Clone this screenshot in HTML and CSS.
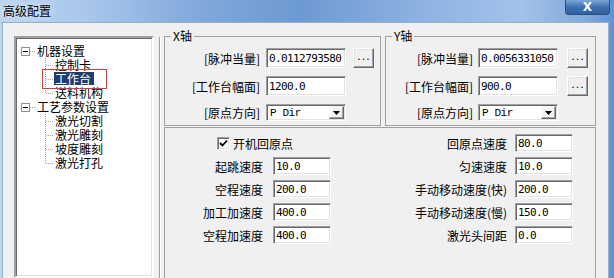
FILE: index.html
```html
<!DOCTYPE html>
<html>

<head>
  <meta charset="UTF-8" />
  <title>高级配置</title>
  <link rel="stylesheet" href="styles.css">
</head>

<body>
  <div class="window">
    <div class="titlebar">
      <span class="title">高级配置</span>
      <span class="close-btn">X</span>
    </div>

    <div class="client">
      <!-- 左侧设置树 -->
      <div class="tree">
        <ul class="tree-root">
          <li>
            <div class="node"><span class="expander"></span><span class="node-text">机器设置</span></div>
            <ul class="tree-children">
              <li><span class="node-text">控制卡</span></li>
              <li class="selected"><span class="node-text">工作台</span></li>
              <li><span class="node-text">送料机构</span></li>
            </ul>
          </li>
          <li>
            <div class="node"><span class="expander"></span><span class="node-text">工艺参数设置</span></div>
            <ul class="tree-children">
              <li><span class="node-text">激光切割</span></li>
              <li><span class="node-text">激光雕刻</span></li>
              <li><span class="node-text">坡度雕刻</span></li>
              <li><span class="node-text">激光打孔</span></li>
            </ul>
          </li>
        </ul>
        <div class="tree-mark"></div>
      </div>

      <div class="separator"></div>

      <div class="settings">
        <div class="axes">
          <fieldset class="axis axis-x">
            <legend>X轴</legend>
            <div class="axis-grid">
              <label>[脉冲当量]</label>
              <input class="edit" type="text" value="0.0112793580">
              <button class="dots">...</button>

              <label>[工作台幅面]</label>
              <input class="edit" type="text" value="1200.0">
              <span></span>

              <label>[原点方向]</label>
              <div class="combo">
                <span class="combo-text">P Dir</span>
                <span class="combo-btn"><svg width="7" height="4" viewBox="0 0 7 4"><path d="M0 0H7L3.5 4Z" fill="#000"/></svg></span>
              </div>
              <span></span>
            </div>
          </fieldset>

          <fieldset class="axis axis-y">
            <legend>Y轴</legend>
            <div class="axis-grid">
              <label>[脉冲当量]</label>
              <input class="edit" type="text" value="0.0056331050">
              <button class="dots">...</button>

              <label>[工作台幅面]</label>
              <input class="edit" type="text" value="900.0">
              <button class="dots">...</button>

              <label>[原点方向]</label>
              <div class="combo">
                <span class="combo-text">P Dir</span>
                <span class="combo-btn"><svg width="7" height="4" viewBox="0 0 7 4"><path d="M0 0H7L3.5 4Z" fill="#000"/></svg></span>
              </div>
              <span></span>
            </div>
          </fieldset>
        </div>

        <div class="params">
          <div class="param-col param-left">
            <div class="check-row">
              <span class="check-box"><svg width="9" height="9" viewBox="0 0 9 9"><path d="M1 4L3.5 6.5L8 1.5" fill="none" stroke="#000" stroke-width="1.8"/></svg></span>
              <span>开机回原点</span>
            </div>
            <label>起跳速度</label>
            <input class="edit small" type="text" value="10.0">
            <label>空程速度</label>
            <input class="edit small" type="text" value="200.0">
            <label>加工加速度</label>
            <input class="edit small" type="text" value="400.0">
            <label>空程加速度</label>
            <input class="edit small" type="text" value="400.0">
          </div>

          <div class="param-col param-right">
            <label>回原点速度</label>
            <input class="edit small" type="text" value="80.0">
            <label>匀速速度</label>
            <input class="edit small" type="text" value="10.0">
            <label>手动移动速度(快)</label>
            <input class="edit small" type="text" value="200.0">
            <label>手动移动速度(慢)</label>
            <input class="edit small" type="text" value="150.0">
            <label>激光头间距</label>
            <input class="edit small" type="text" value="0.0">
          </div>
        </div>
      </div>
    </div>
  </div>
</body>

</html>
```

FILE: styles.css
```css
body {
  margin: 0;
  width: 614px;
  height: 278px;
  overflow: hidden;
  font-family: "Noto Sans CJK SC", sans-serif;
  font-size: 12px;
  color: #000;
}

/* Window frame */
.window {
  height: 278px;
  display: flex;
  flex-direction: column;
  background: linear-gradient(90deg, #bcd5f1 0, #a8c6eb 90px, #80a8db 200px, #6d99d2 300px, #8db2e2 420px, #a3c2e9 520px, #7fa7d9 590px, #5d93d4 614px);
}

.titlebar {
  height: 22px;
  display: flex;
  justify-content: space-between;
  align-items: flex-start;
}

.title {
  padding: 4px 0 0 3px;
  font-size: 12px;
  line-height: 14px;
  text-shadow: 0 0 6px rgba(255, 255, 255, 0.9);
}

.close-btn {
  width: 45px;
  height: 15px;
  margin-right: 4px;
  box-sizing: border-box;
  border: 1px solid #2b4f82;
  border-top: none;
  border-radius: 0 0 4px 4px;
  background: linear-gradient(#7ea6d8, #3f70b0 50%, #2f609f);
  color: #fff;
  font: bold 12px "DejaVu Sans", sans-serif;
  line-height: 14px;
  text-align: center;
}

.client {
  flex: 1;
  display: flex;
  margin: 0 5px 0 2px;
  padding: 7px 0 0 11px;
  background-color: #f0f0f0;
  border: 1px solid #9aaec8;
  border-bottom: none;
}

/* Tree */
.tree {
  position: relative;
  width: 140px;
  flex-shrink: 0;
  margin-top: 6px;
  padding-top: 6px;
  box-sizing: border-box;
  background-color: #fff;
  border: 2px solid;
  border-color: #a0a0a0 #fff #fff #a0a0a0;
  box-shadow: inset 1px 1px #696969, inset -1px -1px #e3e3e3;
}

.tree ul {
  list-style: none;
  margin: 0;
  padding: 0;
}

.node {
  height: 14px;
  display: flex;
  align-items: center;
  padding-left: 5px;
}

.expander {
  position: relative;
  width: 9px;
  height: 9px;
  box-sizing: border-box;
  margin-right: 7px;
  border: 1px solid #919191;
  background-color: #fff;
}

.expander::before {
  content: "";
  position: absolute;
  left: 1px;
  top: 3px;
  width: 5px;
  height: 1px;
  background-color: #000;
}

.expander::after {
  content: "";
  position: absolute;
  left: 8px;
  top: 3px;
  width: 5px;
  border-top: 1px dotted #a0a0a0;
}

.node-text {
  display: inline-block;
  height: 14px;
  line-height: 14px;
  vertical-align: top;
  white-space: nowrap;
}

.tree-children {
  position: relative;
}

.tree-children::before {
  content: "";
  position: absolute;
  left: 29px;
  top: 0;
  bottom: 7px;
  border-left: 1px dotted #a0a0a0;
}

.tree-children li {
  position: relative;
  height: 14px;
  padding-left: 39px;
}

.tree-children li::before {
  content: "";
  position: absolute;
  left: 30px;
  top: 7px;
  width: 7px;
  border-top: 1px dotted #a0a0a0;
}

.tree-children li.selected .node-text {
  height: 13px;
  line-height: 13px;
  margin-left: -1px;
  padding: 0 3px 0 1px;
  background-color: #1f3d70;
  color: #fff;
}

.tree-mark {
  position: absolute;
  left: 26px;
  top: 31px;
  width: 65px;
  height: 20px;
  box-sizing: border-box;
  border: 1px solid #d23f3f;
}

.separator {
  width: 1px;
  flex-shrink: 0;
  margin: 7px 4px 0 5px;
  background-color: #a0a0a0;
  box-shadow: 1px 0 #fff;
}

/* Right side */
.settings {
  width: 432px;
  display: flex;
  flex-direction: column;
}

.axes {
  display: flex;
  gap: 4px;
}

.axis {
  height: 96px;
  box-sizing: border-box;
  margin: 0;
  padding: 6px 6px 0 0;
  min-width: 0;
  border: 1px solid #a0a0a0;
}

.axis-x {
  width: 217px;
}

.axis-y {
  width: 211px;
  padding-right: 7px;
}

.axis legend {
  margin-left: 6px;
  padding: 0 2px;
  font-size: 12px;
  line-height: 12px;
}

.axis-grid {
  display: grid;
  grid-template-columns: 1fr 80px 28px;
  grid-template-rows: 20px 20px 17px;
  row-gap: 8px;
  align-items: center;
}

.axis-y .axis-grid {
  grid-template-columns: 1fr 80px 30px;
}

.axis-grid label {
  justify-self: end;
  margin-right: 6px;
  white-space: nowrap;
}

.axis-y .axis-grid label {
  margin-right: 5px;
}

.edit {
  width: 80px;
  height: 20px;
  box-sizing: border-box;
  margin: 0;
  padding: 0 0 0 2px;
  border: 1px solid;
  border-color: #a0a0a0 #fff #fff #a0a0a0;
  box-shadow: inset 1px 1px #696969, inset -1px -1px #e3e3e3;
  background-color: #fff;
  color: #000;
  font: 11px "DejaVu Sans Mono", monospace;
  letter-spacing: -0.6px;
  outline: none;
}

.edit.small {
  width: 58px;
  height: 18px;
}

.dots {
  justify-self: end;
  width: 21px;
  height: 20px;
  box-sizing: border-box;
  margin: 0;
  padding: 0 0 3px 1px;
  border: 1px solid;
  border-color: #fff #696969 #696969 #fff;
  box-shadow: inset -1px -1px #a0a0a0, inset 1px 1px #e3e3e3;
  background-color: #f0f0f0;
  color: #000;
  font: 11px "DejaVu Sans", sans-serif;
  letter-spacing: 1px;
  line-height: 14px;
}

.combo {
  width: 80px;
  height: 17px;
  box-sizing: border-box;
  display: flex;
  align-items: center;
  border: 1px solid;
  border-color: #a0a0a0 #fff #fff #a0a0a0;
  box-shadow: inset 1px 1px #696969, inset -1px -1px #e3e3e3;
  background-color: #fff;
}

.combo-text {
  flex: 1;
  padding-left: 3px;
  font: 11px "Liberation Mono", monospace;
  letter-spacing: -0.4px;
}

.combo-btn {
  width: 15px;
  height: 13px;
  margin-right: 1px;
  box-sizing: border-box;
  display: flex;
  justify-content: center;
  align-items: center;
  border: 1px solid;
  border-color: #f0f0f0 #696969 #696969 #f0f0f0;
  box-shadow: inset -1px -1px #a0a0a0, inset 1px 1px #fff;
  background-color: #f0f0f0;
}

/* Lower parameters panel */
.params {
  flex: 1;
  display: flex;
  margin-top: 1px;
  padding: 6px 22px 0 0;
  border: 1px solid #a0a0a0;
  border-bottom: none;
}

.param-col {
  display: grid;
  grid-template-columns: 1fr 58px;
  grid-auto-rows: 18px;
  row-gap: 5px;
  align-items: center;
  align-content: start;
}

.param-left {
  width: 166px;
  column-gap: 10px;
}

.param-right {
  flex: 1;
  column-gap: 8px;
}

.param-col label {
  justify-self: end;
  white-space: nowrap;
}

.check-row {
  grid-column: 1 / -1;
  display: flex;
  align-items: center;
  gap: 3px;
  margin-left: 52px;
}

.check-box {
  width: 13px;
  height: 13px;
  box-sizing: border-box;
  display: flex;
  justify-content: center;
  align-items: center;
  border: 1px solid;
  border-color: #a0a0a0 #fff #fff #a0a0a0;
  box-shadow: inset 1px 1px #696969, inset -1px -1px #e3e3e3;
  background-color: #fff;
}
```
